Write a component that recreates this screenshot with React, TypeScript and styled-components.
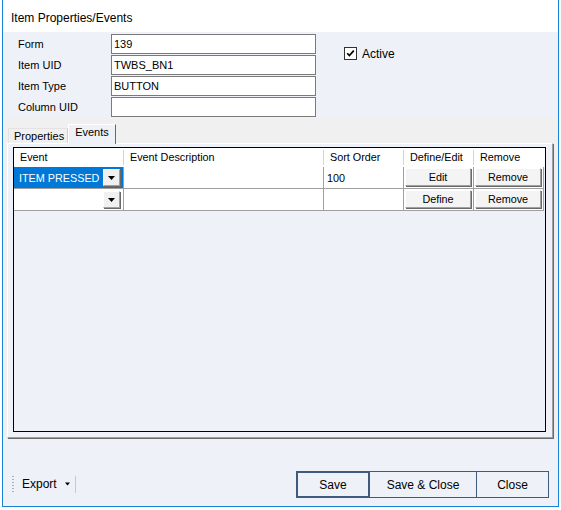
import React from "react";
import styled, { createGlobalStyle } from "styled-components";

const Global = createGlobalStyle`
  html, body { margin: 0; padding: 0; background: #ffffff; }
  * { box-sizing: border-box; }
  body { font-family: "Liberation Sans", Arial, sans-serif; font-size: 11px; color: #000; }
`;

const Window = styled.div`
  margin-left: 2px;
  width: 557px;
  height: 507px;
  border: 1px solid #1883d7;
  border-top: none;
  display: flex;
  flex-direction: column;
  background: #eef2f8;
`;

const TitleBar = styled.div`
  height: 32px;
  background: #ffffff;
  padding: 11px 0 0 8px;
  font-size: 12px;
  line-height: 14px;
  color: #000;
`;

const TopArea = styled.div`
  display: flex;
  padding: 2px 0 0 15px;
`;

const Fields = styled.div`
  display: grid;
  grid-template-columns: 93px 205px;
  row-gap: 1px;
`;

const Label = styled.div`
  height: 20px;
  line-height: 20px;
`;

const TextBox = styled.div`
  height: 20px;
  border: 1px solid #7a7a7a;
  background: #ffffff;
  padding: 0 2px;
  line-height: 18px;
`;

const CheckRow = styled.label`
  display: flex;
  align-items: center;
  gap: 5px;
  margin: 13px 0 0 28px;
  height: 13px;
  font-size: 12px;
`;

const CheckBox = styled.span`
  width: 13px;
  height: 13px;
  border: 1px solid #333;
  background: #fff;
  display: flex;
  align-items: center;
  justify-content: center;
`;

const TabArea = styled.div`
  background: #f0f0f0;
  padding: 0 4px 0 4px;
  margin-top: 1px;
`;

const TabStrip = styled.div`
  height: 25px;
  display: flex;
  align-items: flex-end;
  padding-left: 1px;
`;

const Tab = styled.div<{ $active?: boolean }>`
  height: ${(p) => (p.$active ? 20 : 15)}px;
  padding: ${(p) => (p.$active ? "1px 6px 0 6px" : "1px 3px 0 5px")};
  background: ${(p) => (p.$active ? "#eef2f8" : "#f0f0f0")};
  border: 1px solid ${(p) => (p.$active ? "#ffffff" : "#e3e3e3")};
  border-right: 1px solid ${(p) => (p.$active ? "#696969" : "#cfcfcf")};
  border-bottom: none;
  position: relative;
  line-height: 12px;
  margin-bottom: ${(p) => (p.$active ? "-1px" : "0")};
  z-index: ${(p) => (p.$active ? 1 : 0)};
`;

const Panel = styled.div`
  height: 295px;
  background: #eef2f8;
  border-top: 1px solid #ffffff;
  border-left: 1px solid #ffffff;
  border-right: 1px solid #a0a0a0;
  border-bottom: 1px solid #a0a0a0;
  box-shadow: 1px 1px 0 #696969;
  padding: 3px 6px 4px 5px;
  margin-right: 1px;
`;

const Grid = styled.div`
  height: 285px;
  border: 1px solid #000;
  background: #eef2f8;
  display: flex;
  flex-direction: column;
  font-size: 10.8px;
`;

const COLS = "110px 200px 80px 70px 70px";

const HeaderRow = styled.div`
  display: grid;
  grid-template-columns: ${COLS};
  height: 19px;
  background: #ffffff;
`;

const HeaderCell = styled.div<{ $last?: boolean }>`
  padding: 3px 0 0 6px;
  line-height: 13px;
  position: relative;
  &::after {
    content: "";
    display: ${(p) => (p.$last ? "none" : "block")};
    position: absolute;
    right: 0;
    top: 2px;
    bottom: 2px;
    width: 1px;
    background: #d5d5d5;
  }
`;

const Row = styled.div`
  display: grid;
  grid-template-columns: ${COLS};
  height: 22px;
`;

const Cell = styled.div<{ $selected?: boolean }>`
  background: ${(p) => (p.$selected ? "#0078d7" : "#ffffff")};
  color: ${(p) => (p.$selected ? "#ffffff" : "#000000")};
  border-right: 1px solid #a0a0a0;
  border-bottom: 1px solid #a0a0a0;
  padding: 0 2px 0 5px;
  display: flex;
  align-items: center;
  justify-content: space-between;
  white-space: nowrap;
`;

const SortCell = styled(Cell)`
  padding-left: 3px;
`;

const DropButton = styled.span`
  width: 17px;
  height: 17px;
  background: #f0f0f0;
  border-top: 1px solid #ffffff;
  border-left: 1px solid #ffffff;
  border-right: 1px solid #a0a0a0;
  border-bottom: 1px solid #a0a0a0;
  box-shadow: 1px 1px 0 #696969;
  display: flex;
  align-items: center;
  justify-content: center;
  margin-right: 1px;
`;

const ButtonCell = styled.div`
  border-right: 1px solid #a0a0a0;
  border-bottom: 1px solid #a0a0a0;
  background: #ffffff;
  padding: 1px;
  display: flex;
`;

const CellButton = styled.div`
  flex: 1;
  background: #f4f4f4;
  border-top: 1px solid #ffffff;
  border-left: 1px solid #ffffff;
  border-right: 1px solid #a0a0a0;
  border-bottom: 1px solid #a0a0a0;
  box-shadow: 1px 1px 0 #696969;
  display: flex;
  align-items: center;
  justify-content: center;
  margin: 0 1px 1px 0;
`;

const Footer = styled.div`
  flex: 1;
  display: flex;
  align-items: flex-end;
  justify-content: space-between;
  padding: 0 9px 8px 5px;
`;

const Toolbar = styled.div`
  display: flex;
  align-items: center;
  height: 18px;
  margin-bottom: 5px;
`;

const Grip = styled.span`
  width: 2px;
  height: 16px;
  margin: 0 8px 0 4px;
  background-image: linear-gradient(#b0b0b0 50%, transparent 50%);
  background-size: 2px 3px;
`;

const ToolLabel = styled.span`
  font-size: 12px;
  color: #000;
`;

const Arrow = styled.span`
  margin-left: 8px;
  display: flex;
`;

const ToolSep = styled.span`
  width: 1px;
  height: 17px;
  background: #c8c8c8;
  margin-left: 5px;
`;

const ButtonBar = styled.div`
  display: flex;
`;

const FormButton = styled.button<{ $w: number; $default?: boolean }>`
  width: ${(p) => p.$w}px;
  height: 27px;
  background: #eef2f8;
  border: ${(p) => (p.$default ? 2 : 1)}px solid #3e5a7c;
  font-family: "Liberation Sans", Arial, sans-serif;
  font-size: 12px;
  color: #000;
  padding: 0;
  margin-left: -1px;
`;

const Triangle = ({ size = 7 }: { size?: number }) => (
  <svg width={size} height={4} viewBox="0 0 7 4">
    <path d="M0 0 H7 L3.5 4 Z" fill="#000" />
  </svg>
);

const Check = () => (
  <svg width="9" height="9" viewBox="0 0 9 9">
    <path d="M1.2 4.2 L3.4 6.6 L7.8 1.6" stroke="#000" strokeWidth="1.7" fill="none" />
  </svg>
);

const fields: [string, string][] = [
  ["Form", "139"],
  ["Item UID", "TWBS_BN1"],
  ["Item Type", "BUTTON"],
  ["Column UID", ""],
];

const headers = ["Event", "Event Description", "Sort Order", "Define/Edit", "Remove"];

const rows = [
  { event: "ITEM PRESSED", sort: "100", action: "Edit", selected: true },
  { event: "", sort: "", action: "Define", selected: false },
];

export default function App() {
  return (
    <>
      <Global />
      <Window>
        <TitleBar>Item Properties/Events</TitleBar>
        <TopArea>
          <Fields>
            {fields.map(([label, value]) => (
              <React.Fragment key={label}>
                <Label>{label}</Label>
                <TextBox>{value}</TextBox>
              </React.Fragment>
            ))}
          </Fields>
          <CheckRow>
            <CheckBox>
              <Check />
            </CheckBox>
            Active
          </CheckRow>
        </TopArea>
        <TabArea>
          <TabStrip>
            <Tab>Properties</Tab>
            <Tab $active>Events</Tab>
          </TabStrip>
          <Panel>
            <Grid>
              <HeaderRow>
                {headers.map((h, i) => (
                  <HeaderCell key={h} $last={i === headers.length - 1}>
                    {h}
                  </HeaderCell>
                ))}
              </HeaderRow>
              {rows.map((r, i) => (
                <Row key={i}>
                  <Cell $selected={r.selected}>
                    <span>{r.event}</span>
                    <DropButton>
                      <Triangle />
                    </DropButton>
                  </Cell>
                  <Cell />
                  <SortCell>{r.sort}</SortCell>
                  <ButtonCell>
                    <CellButton>{r.action}</CellButton>
                  </ButtonCell>
                  <ButtonCell>
                    <CellButton>Remove</CellButton>
                  </ButtonCell>
                </Row>
              ))}
            </Grid>
          </Panel>
        </TabArea>
        <Footer>
          <Toolbar>
            <Grip />
            <ToolLabel>Export</ToolLabel>
            <Arrow>
              <Triangle size={5} />
            </Arrow>
            <ToolSep />
          </Toolbar>
          <ButtonBar>
            <FormButton $w={74} $default>
              Save
            </FormButton>
            <FormButton $w={108}>Save &amp; Close</FormButton>
            <FormButton $w={73}>Close</FormButton>
          </ButtonBar>
        </Footer>
      </Window>
    </>
  );
}
